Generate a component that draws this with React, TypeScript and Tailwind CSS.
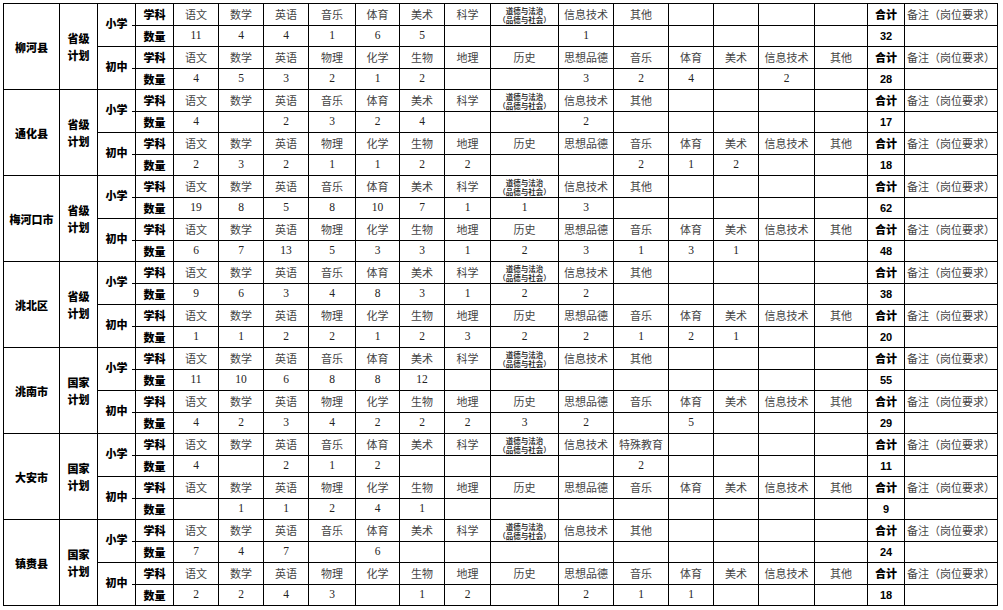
import React from "react";

type Block = {
  county: string;
  plan: [string, string];
  primaryHeader: string[];
  primary: (string | number)[];
  primaryTotal: number;
  middle: (string | number)[];
  middleTotal: number;
};

const PRIMARY = ["语文", "数学", "英语", "音乐", "体育", "美术", "科学", "DAODE", "信息技术", "其他", "", "", "", ""];
const MIDDLE = ["语文", "数学", "英语", "物理", "化学", "生物", "地理", "历史", "思想品德", "音乐", "体育", "美术", "信息技术", "其他"];

const pad = (a: (string | number)[]) => {
  const r = [...a];
  while (r.length < 14) r.push("");
  return r;
};

const blocks: Block[] = [
  { county: "柳河县", plan: ["省级", "计划"], primaryHeader: PRIMARY, primary: [11, 4, 4, 1, 6, 5, "", "", 1], primaryTotal: 32, middle: [4, 5, 3, 2, 1, 2, "", "", 3, 2, 4, "", 2], middleTotal: 28 },
  { county: "通化县", plan: ["省级", "计划"], primaryHeader: PRIMARY, primary: [4, "", 2, 3, 2, 4, "", "", 2], primaryTotal: 17, middle: [2, 3, 2, 1, 1, 2, 2, "", "", 2, 1, 2], middleTotal: 18 },
  { county: "梅河口市", plan: ["省级", "计划"], primaryHeader: PRIMARY, primary: [19, 8, 5, 8, 10, 7, 1, 1, 3], primaryTotal: 62, middle: [6, 7, 13, 5, 3, 3, 1, 2, 3, 1, 3, 1], middleTotal: 48 },
  { county: "洮北区", plan: ["省级", "计划"], primaryHeader: PRIMARY, primary: [9, 6, 3, 4, 8, 3, 1, 2, 2], primaryTotal: 38, middle: [1, 1, 2, 2, 1, 2, 3, 2, 2, 1, 2, 1], middleTotal: 20 },
  { county: "洮南市", plan: ["国家", "计划"], primaryHeader: PRIMARY, primary: [11, 10, 6, 8, 8, 12], primaryTotal: 55, middle: [4, 2, 3, 4, 2, 2, 2, 3, 2, "", 5], middleTotal: 29 },
  { county: "大安市", plan: ["国家", "计划"], primaryHeader: ["语文", "数学", "英语", "音乐", "体育", "美术", "科学", "DAODE", "信息技术", "特殊教育", "", "", "", ""], primary: [4, "", 2, 1, 2, "", "", "", "", 2], primaryTotal: 11, middle: ["", 1, 1, 2, 4, 1], middleTotal: 9 },
  { county: "镇赉县", plan: ["国家", "计划"], primaryHeader: PRIMARY, primary: [7, 4, 7, "", 6], primaryTotal: 24, middle: [2, 2, 4, 3, "", 1, 2, "", 2, 1, 1], middleTotal: 18 },
];

const cjk = "font-['Noto_Sans_CJK_SC',sans-serif]";
const cell = "bg-white flex items-center justify-center overflow-hidden";

function Subject({ name }: { name: string }) {
  if (name === "DAODE") {
    return (
      <div className={`${cell} flex-col text-[7.5px] leading-[9px] font-bold text-[#333] ${cjk}`}>
        <span>道德与法治</span>
        <span>（品德与社会）</span>
      </div>
    );
  }
  return <div className={`${cell} text-[11px] text-[#444] ${cjk}`}>{name}</div>;
}

function Num({ v }: { v: string | number }) {
  return <div className={`${cell} text-[11.5px] text-[#222] font-['Liberation_Serif',serif]`}>{v}</div>;
}

function Label({ t }: { t: string }) {
  return <div className={`${cell} text-[11px] font-black text-black ${cjk}`}>{t}</div>;
}

function Level({ t }: { t: string }) {
  return (
    <div className={`${cell} row-span-2 relative text-[11px] font-black text-black ${cjk}`}>
      <span className="-mt-[3px]">{t}</span>
      <span className="absolute right-0 top-1/2 w-[3px] h-[1px] bg-black" />
    </div>
  );
}

function Total({ v }: { v: number }) {
  return <div className={`${cell} text-[11px] font-bold text-black font-['Liberation_Sans',sans-serif]`}>{v}</div>;
}

function Note() {
  return <div className={`${cell} text-[11px] text-[#444] ${cjk}`}>备注（岗位要求）</div>;
}

function Empty() {
  return <div className="bg-white" />;
}

export default function App() {
  return (
    <div className="w-[1003px] h-[610px] bg-white pl-[3px] pt-[3px]">
      <div className="grid w-fit bg-black p-[1px] gap-[1px] grid-cols-[55px_37px_37px_37px_44px_44px_44px_46px_43px_44px_45px_67px_54px_54px_44px_44px_55px_52px_36px_92px] grid-rows-[repeat(7,21px_20px_21px_20px)]">
        {blocks.map((b, i) => (
          <React.Fragment key={i}>
            <div className={`${cell} row-span-4 text-[11px] font-black text-black ${cjk}`}>
              <span className="mt-[2px]">{b.county}</span>
            </div>
            <div className={`${cell} row-span-4 flex-col text-[11px] leading-[17px] font-black text-black ${cjk}`}>
              <span>{b.plan[0]}</span>
              <span>{b.plan[1]}</span>
            </div>
            <Level t="小学" />
            <Label t="学科" />
            {b.primaryHeader.map((s, j) => (s ? <Subject key={j} name={s} /> : <Empty key={j} />))}
            <Label t="合计" />
            <Note />
            <Label t="数量" />
            {pad(b.primary).map((v, j) => (
              <Num key={j} v={v} />
            ))}
            <Total v={b.primaryTotal} />
            <Empty />
            <Level t="初中" />
            <Label t="学科" />
            {MIDDLE.map((s, j) => (
              <Subject key={j} name={s} />
            ))}
            <Label t="合计" />
            <Note />
            <Label t="数量" />
            {pad(b.middle).map((v, j) => (
              <Num key={j} v={v} />
            ))}
            <Total v={b.middleTotal} />
            <Empty />
          </React.Fragment>
        ))}
      </div>
    </div>
  );
}
